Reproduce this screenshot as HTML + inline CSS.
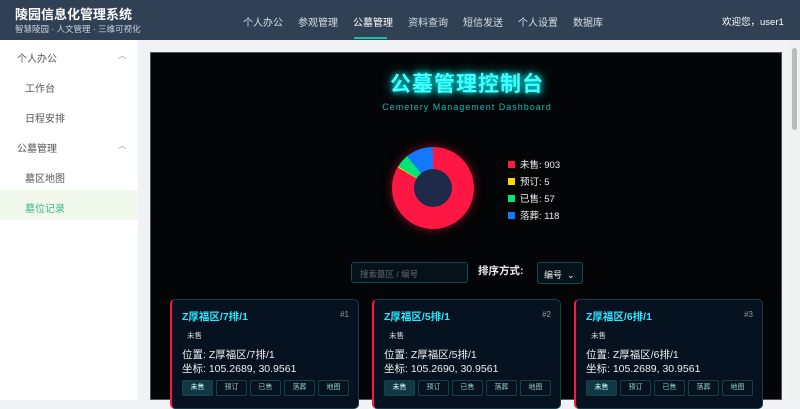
<!DOCTYPE html>
<html><head><meta charset="utf-8"><style>
*{margin:0;padding:0;box-sizing:border-box}
body{width:800px;height:400px;overflow:hidden;font-family:"Liberation Sans","Noto Sans CJK SC",sans-serif;background:#f0f2f5;position:relative}
.hdr{position:absolute;left:0;top:0;width:800px;height:40px;background:#304155;color:#fff}
.t1{position:absolute;left:15px;top:6px;font-size:13px;font-weight:bold;line-height:18px}
.t2{position:absolute;left:15px;top:24px;font-size:8.5px;color:#cfd6de;line-height:11px}
.nav{position:absolute;top:14px;font-size:10px;color:#d6dde5}
.nav.a{color:#fff}
.ul{position:absolute;left:354px;top:37px;width:33px;height:2px;background:#1fbf9f}
.user{position:absolute;left:722px;top:14px;font-size:9.5px;color:#fff}
.side{position:absolute;left:0;top:40px;width:138px;height:360px;background:#fff}
.si{position:absolute;font-size:10px;color:#555}
.arr{position:absolute;left:118px;font-size:8px;color:#888}
.sel{position:absolute;left:0;top:150px;width:138px;height:30px;background:#f0f9eb}
.panel{position:absolute;left:150px;top:52px;width:632px;height:348px;background:#040506;border:1px solid #555}
.title{position:absolute;left:0;width:632px;top:20px;line-height:24px;text-align:center;font-size:21px;font-weight:bold;color:#4ff;text-shadow:0 0 6px #0ff,0 0 12px #0cc;letter-spacing:1px}
.sub{position:absolute;left:0;width:632px;top:48px;line-height:12px;text-align:center;font-size:9px;color:#1bb;letter-spacing:1px}
.donut{position:absolute;left:241px;top:94px;width:82px;height:82px;border-radius:50%;background:conic-gradient(#ff1744 0 83.4%,#ffd600 83.4% 83.8%,#00e676 83.8% 89.1%,#1478ff 89.1% 100%);box-shadow:0 0 10px rgba(255,23,68,.5)}
.hole{position:absolute;left:22px;top:22px;width:38px;height:38px;border-radius:50%;background:#1f2a4a}
.lg{position:absolute;left:357px;font-size:9.5px;color:#eee}
.lg i{display:inline-block;width:7px;height:7px;margin-right:5px;vertical-align:0}
.search{position:absolute;left:200px;top:209px;width:117px;height:21px;border:1px solid #17494f;border-radius:3px;font-size:8.5px;color:#667;padding:5px 8px;background:#06121a}
.sort{position:absolute;left:327px;top:210px;font-size:10.5px;color:#eee;font-weight:bold}
.selb{position:absolute;left:386px;top:209px;width:46px;height:22px;border:1px solid #17494f;border-radius:3px;font-size:9px;color:#eee;padding:5px 6px;background:#06121a;white-space:nowrap}
.card{position:absolute;top:246px;width:189px;height:110px;border:1px solid #1b3a44;border-left:2px solid #ff1744;border-radius:5px;background:#061220}
.cn{position:absolute;left:10px;top:9px;font-size:10.5px;font-weight:bold;color:#2ee6ff}
.no{position:absolute;right:9px;top:10px;font-size:8px;color:#999}
.st{position:absolute;left:15px;top:30px;font-size:7.5px;color:#ddd}
.inf{position:absolute;left:10px;top:48px;font-size:10.5px;color:#eee;line-height:14px}
.btns{position:absolute;left:10px;top:80px;display:flex;gap:3px}
.btns span{width:31px;height:16px;border:1px solid #17404a;border-radius:2px;font-size:7px;color:#9cc;text-align:center;line-height:14px}
.btns span.on{background:#0f3a45;color:#dff}
.sb{position:absolute;left:790px;top:40px;width:10px;height:360px;background:#f1f1f1}
.sb div{position:absolute;left:2px;top:8px;width:5px;height:82px;background:#bbb;border-radius:3px}
</style></head><body>
<div class="hdr">
<div class="t1">陵园信息化管理系统</div>
<div class="t2">智慧陵园 · 人文管理 · 三维可视化</div>
<div class="nav" style="left:243px">个人办公</div>
<div class="nav" style="left:298px">参观管理</div>
<div class="nav a" style="left:353px">公墓管理</div>
<div class="nav" style="left:408px">资料查询</div>
<div class="nav" style="left:463px">短信发送</div>
<div class="nav" style="left:518px">个人设置</div>
<div class="nav" style="left:573px">数据库</div>
<div class="ul"></div>
<div class="user">欢迎您，user1</div>
</div>
<div class="side">
<div class="sel"></div>
<div class="si" style="left:17px;top:10px">个人办公</div><div class="arr" style="top:10px">︿</div>
<div class="si" style="left:25px;top:40px">工作台</div>
<div class="si" style="left:25px;top:70px">日程安排</div>
<div class="si" style="left:17px;top:100px">公墓管理</div><div class="arr" style="top:100px">︿</div>
<div class="si" style="left:25px;top:130px">墓区地图</div>
<div class="si" style="left:25px;top:160px;color:#3bb58f">墓位记录</div>
</div>
<div class="panel">
<div class="title">公墓管理控制台</div>
<div class="sub">Cemetery Management Dashboard</div>
<div class="donut"><div class="hole"></div></div>
<div class="lg" style="top:104px"><i style="background:#ff1744"></i>未售: 903</div>
<div class="lg" style="top:121px"><i style="background:#ffd600"></i>预订: 5</div>
<div class="lg" style="top:138px"><i style="background:#00e676"></i>已售: 57</div>
<div class="lg" style="top:155px"><i style="background:#1478ff"></i>落葬: 118</div>
<div class="search">搜索墓区 / 编号</div>
<div class="sort">排序方式:</div>
<div class="selb">编号 &nbsp;⌄</div>
<div class="card" style="left:19px"><div class="cn">Z厚福区/7排/1</div><div class="no">#1</div><div class="st">未售</div><div class="inf">位置: Z厚福区/7排/1<br>坐标: 105.2689, 30.9561</div><div class="btns"><span class="on">未售</span><span>预订</span><span>已售</span><span>落葬</span><span>地图</span></div></div>
<div class="card" style="left:221px"><div class="cn">Z厚福区/5排/1</div><div class="no">#2</div><div class="st">未售</div><div class="inf">位置: Z厚福区/5排/1<br>坐标: 105.2690, 30.9561</div><div class="btns"><span class="on">未售</span><span>预订</span><span>已售</span><span>落葬</span><span>地图</span></div></div>
<div class="card" style="left:423px"><div class="cn">Z厚福区/6排/1</div><div class="no">#3</div><div class="st">未售</div><div class="inf">位置: Z厚福区/6排/1<br>坐标: 105.2689, 30.9561</div><div class="btns"><span class="on">未售</span><span>预订</span><span>已售</span><span>落葬</span><span>地图</span></div></div>
</div>
<div class="sb"><div></div></div>
</body></html>
